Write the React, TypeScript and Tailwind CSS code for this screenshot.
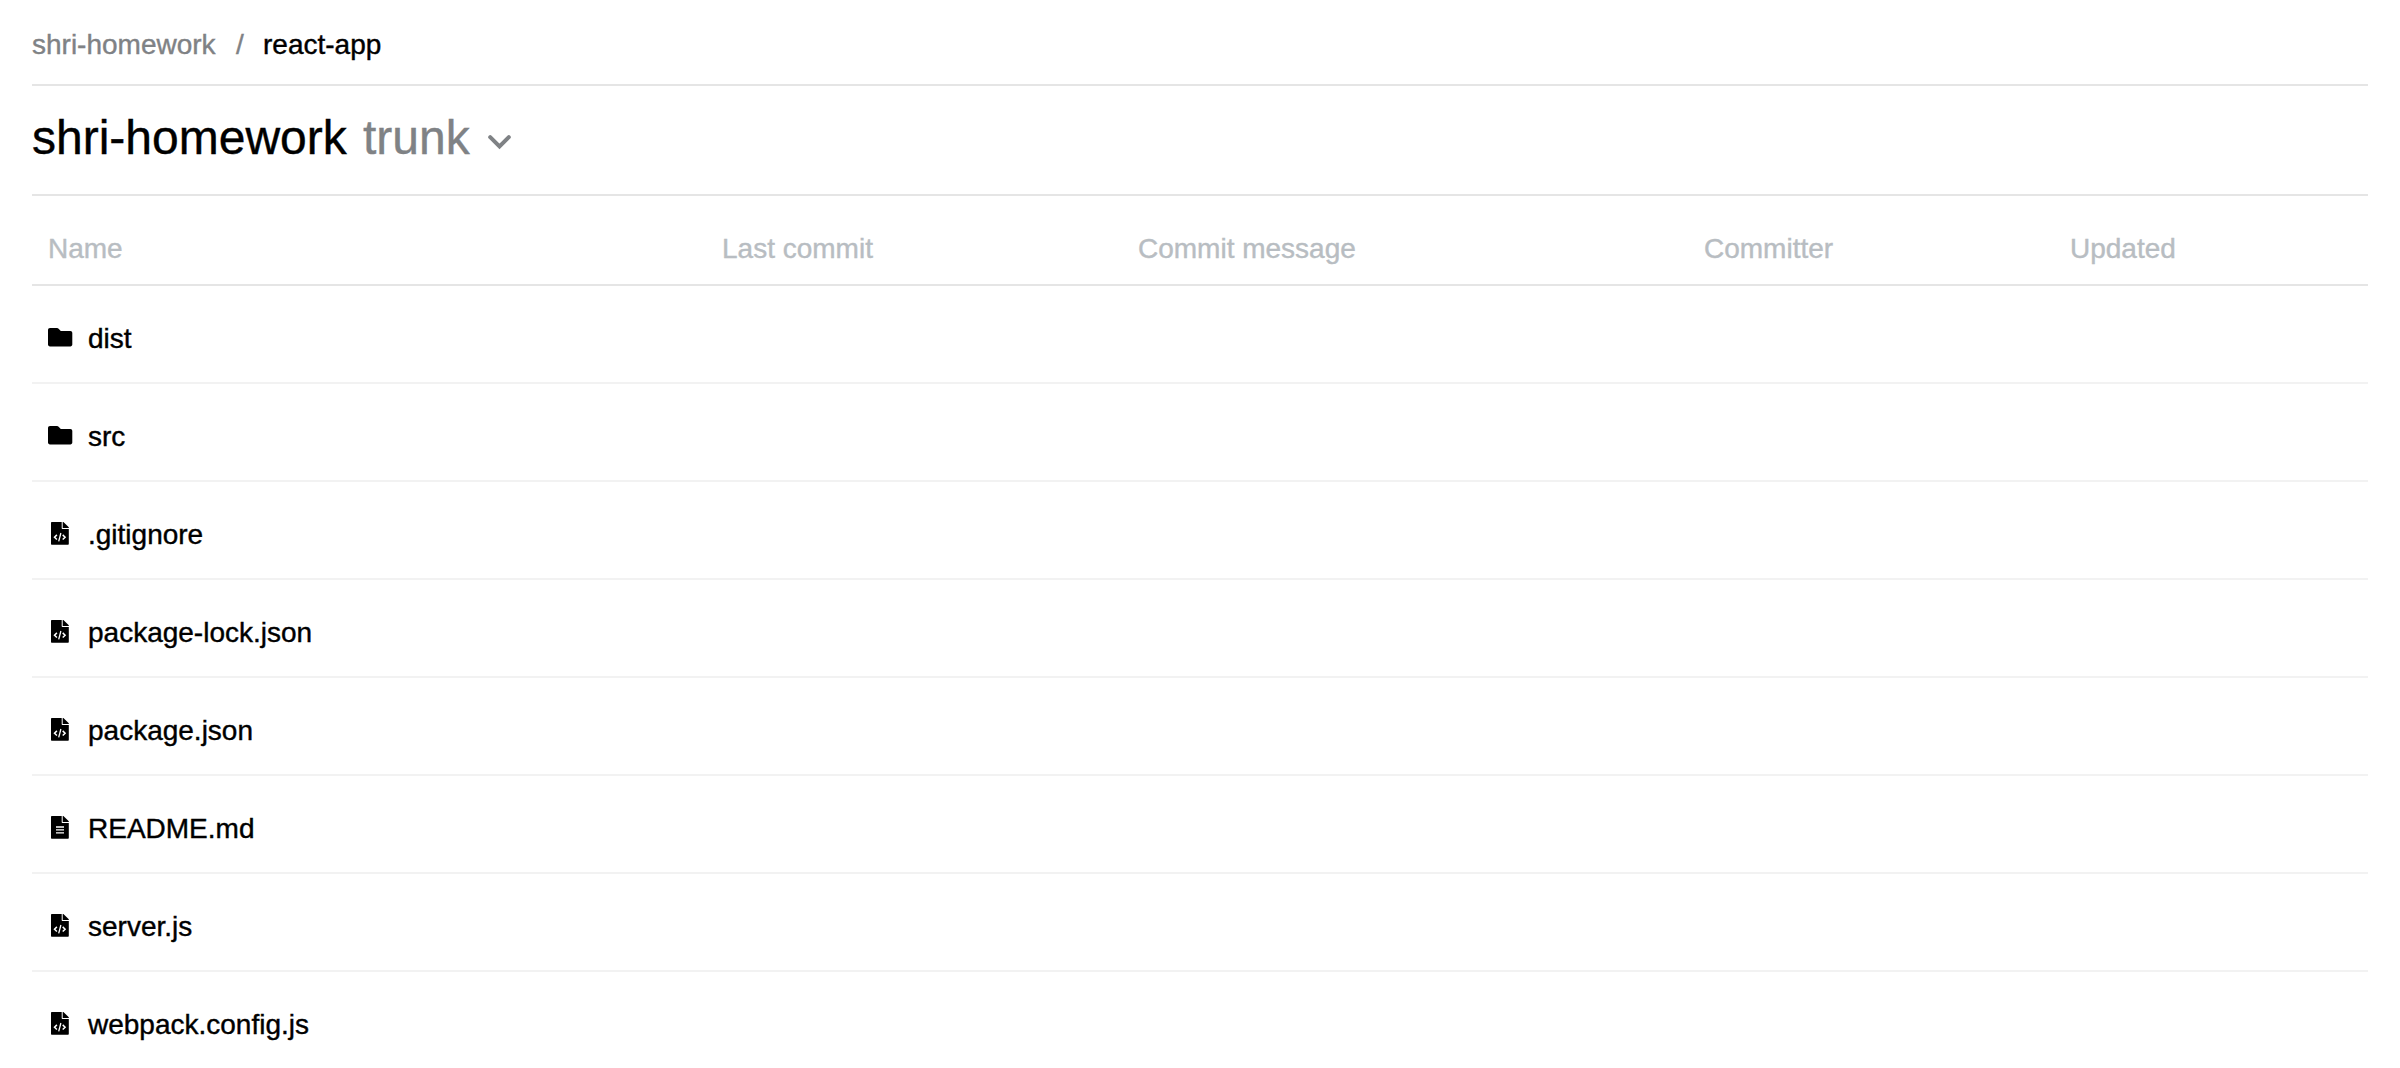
import React from "react";

type Kind = "folder" | "code" | "text";

const columns = ["Name", "Last commit", "Commit message", "Committer", "Updated"];

const files: { name: string; kind: Kind }[] = [
  { name: "dist", kind: "folder" },
  { name: "src", kind: "folder" },
  { name: ".gitignore", kind: "code" },
  { name: "package-lock.json", kind: "code" },
  { name: "package.json", kind: "code" },
  { name: "README.md", kind: "text" },
  { name: "server.js", kind: "code" },
  { name: "webpack.config.js", kind: "code" },
];

function Icon({ kind }: { kind: Kind }) {
  if (kind === "folder") {
    return (
      <svg className="h-6 w-6 shrink-0 overflow-visible" viewBox="0 0 24 24" fill="currentColor">
        <path d="M2 2H9c.7 0 1.100.2 1.600.7L12.800 5H22.400c1.100 0 1.900.8 1.900 1.900v11.700c0 1.100-.8 1.900-1.900 1.900H2c-1.200 0-2-.8-2-1.900V4c0-1.200.8-2 2-2Z" />
      </svg>
    );
  }
  return (
    <svg className="h-6 w-6 shrink-0" viewBox="0 0 24 24">
      <path
        fill="currentColor"
        d="M4 0H13.700V6c0 .6.400 1 1 1H20.800V21.800c0 .6-.4 1-1 1H4c-.6 0-1-.4-1-1V1c0-.6.4-1 1-1ZM14.700 0h.7l5.400 5.300v.7H14.700Z"
      />
      {kind === "code" ? (
        <>
          <path
            d="M8.900 12.900 6.500 15.200 8.900 17.500M14.700 12.900 17.100 15.200 14.700 17.500"
            fill="none"
            stroke="white"
            strokeWidth="1.5"
          />
          <path d="M12.900 11 10.700 19.300" fill="none" stroke="white" strokeWidth="1.300" />
        </>
      ) : (
        <path d="M8 11h8M8 13.900h8M8 16.800h8" fill="none" stroke="white" strokeWidth="1.3" />
      )}
    </svg>
  );
}

export default function App() {
  return (
    <div className="h-[1068px] overflow-hidden bg-white px-8 text-[28px] leading-[32px] text-black [-webkit-text-stroke:0.4px] [font-family:'Liberation_Sans',Arial,sans-serif]">
      <nav className="flex h-[86px] border-b-2 border-[#e5e5e5] pt-[29px]">
        <span className="w-[204px] text-[#7f8285]">shri-homework</span>
        <span className="w-[27px] text-[#7f8285]">/</span>
        <span>react-app</span>
      </nav>
      <header className="flex h-[110px] border-b-2 border-[#e5e5e5] pt-[25px] text-[48px] leading-[54px]">
        <h1 className="w-[331px]">shri-homework</h1>
        <button className="flex items-start text-[#7f8285]">
          <span className="w-[124px] text-left">trunk</span>
          <svg className="mt-[24px] h-4 w-6" viewBox="0 0 24 16" fill="none" stroke="currentColor" strokeWidth="4" strokeLinecap="round">
            <path d="m3.200 2.200 9.300 9.200 9.300-9.200" />
          </svg>
        </button>
      </header>
      <div className="grid h-[90px] grid-cols-[674px_416px_566px_366px_1fr] border-b-2 border-[#e5e5e5] pt-[37px] pl-4 text-[#b8bdc2]">
        {columns.map((column) => (
          <span key={column}>{column}</span>
        ))}
      </div>
      <ul>
        {files.map((file) => (
          <li key={file.name} className="flex h-[98px] gap-4 border-b-2 border-[#f2f2f2] pt-[37px] pl-4">
            <span className="pt-[3px]">
              <Icon kind={file.kind} />
            </span>
            <span>{file.name}</span>
          </li>
        ))}
      </ul>
    </div>
  );
}
